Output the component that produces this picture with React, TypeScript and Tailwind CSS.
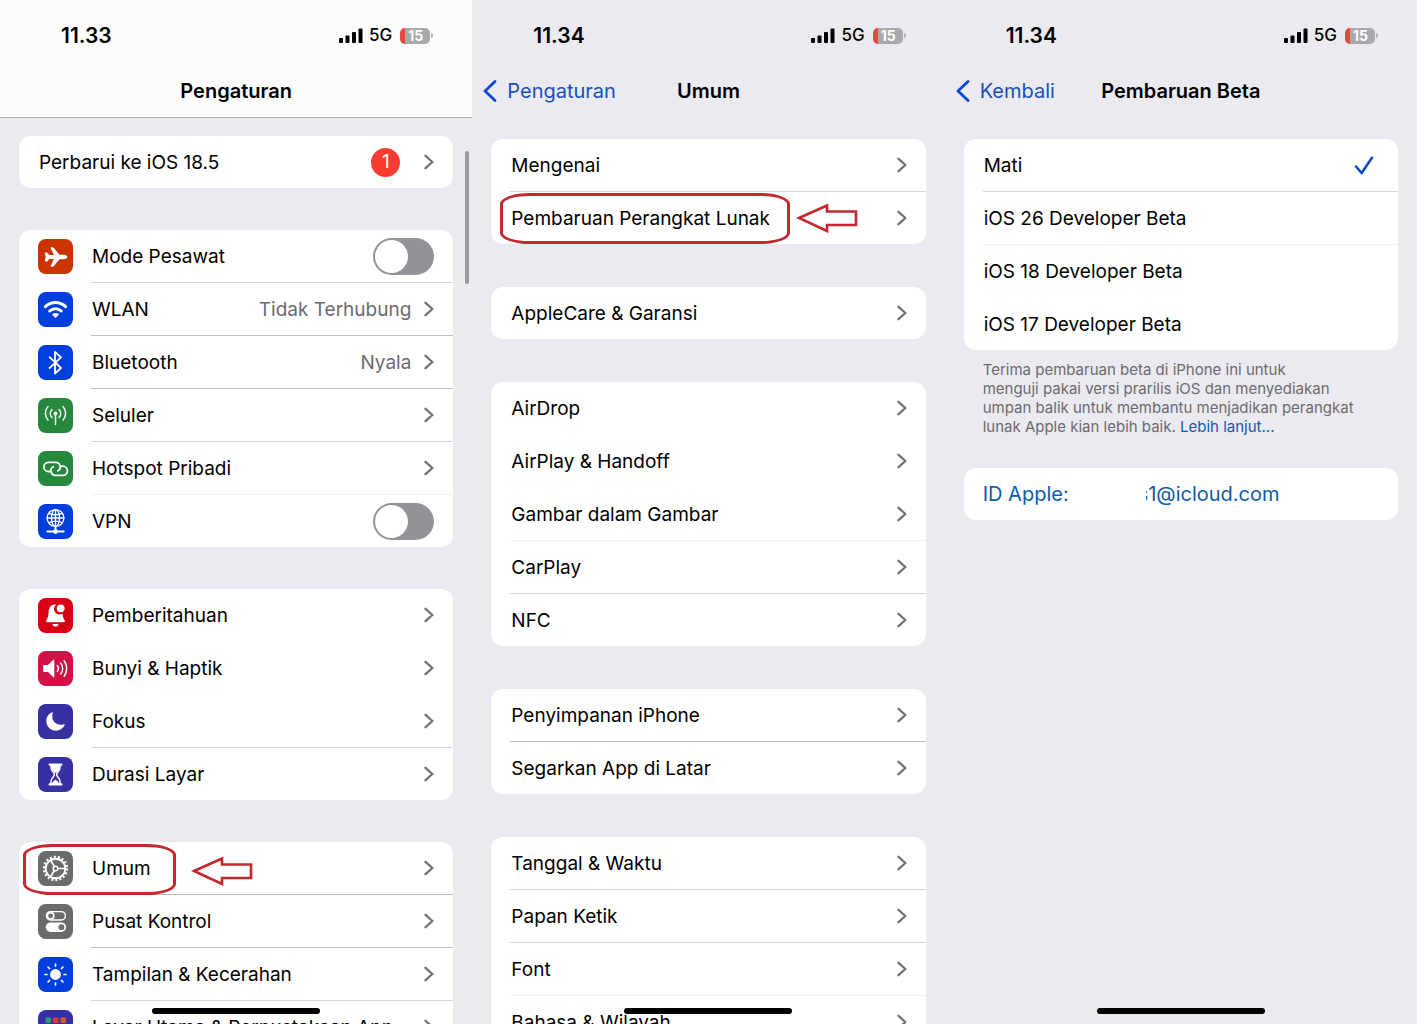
import { useState, type ReactNode } from "react";
import { IoAirplane, IoMoon } from "react-icons/io5";

/* ---------- Icons ---------- */

function Glyph({ children }: { children: ReactNode }) {
  return (
    <svg viewBox="0 0 35 35" className="h-full w-full" fill="none" stroke="#fff" strokeLinecap="round" strokeLinejoin="round" aria-hidden="true">
      {children}
    </svg>
  );
}

const WifiGlyph = () => (
  <Glyph>
    <path d="M7.4 14.6a14.4 14.4 0 0 1 20.2 0" strokeWidth="3" />
    <path d="M11.7 19a8.4 8.4 0 0 1 11.6 0" strokeWidth="3" />
    <path d="M17.5 26l-3.6-3.600a5.200 5.200 0 0 1 7.200 0z" fill="#fff" stroke="none" />
  </Glyph>
);

const BluetoothGlyph = () => (
  <Glyph>
    <path d="M11.600 12.200L23 23l-6 5.500V7L23 12.400L11.600 23" strokeWidth="1.800" />
  </Glyph>
);

const AntennaGlyph = () => (
  <Glyph>
    <circle cx="17.500" cy="15.500" r="2" fill="#fff" stroke="none" />
    <path d="M17.500 16v10.500" strokeWidth="1.500" />
    <path d="M14 11.500a5.500 5.500 0 0 0 0 8M21 11.500a5.500 5.500 0 0 1 0 8M10 8.500a10 10 0 0 0 0 13.500M25 8.500a10 10 0 0 1 0 13.500" strokeWidth="1.500" />
  </Glyph>
);

const LinkGlyph = () => (
  <Glyph>
    <path d="M11.500 20.500H10.500a4.600 4.600 0 0 1 0-9.200h7.200a4.600 4.600 0 0 1 2.200 8.600" strokeWidth="1.800" />
    <path d="M23.500 15.200h1.300a4.600 4.600 0 0 1 0 9.200h-7.200a4.600 4.600 0 0 1-2.300-8.600" strokeWidth="1.800" />
  </Glyph>
);

const VpnGlyph = () => (
  <Glyph>
    <g strokeWidth="1.400">
      <circle cx="17.500" cy="14" r="8.400" />
      <ellipse cx="17.500" cy="14" rx="4" ry="8.400" />
      <path d="M17.500 5.600v16.800M9.100 14h16.800M11 9.400q6.500 3 13 0M11 18.600q6.500-3 13 0" />
    </g>
    <path d="M9.300 27.600h16.400M17.500 23v4" strokeWidth="2" />
    <circle cx="17.500" cy="27.600" r="2.400" fill="#fff" stroke="none" />
  </Glyph>
);

const BellGlyph = () => (
  <Glyph>
    <path d="M18.200 6.700c-4.800-.7-7.300 2.600-7.600 7.400-.2 4.300-.6 5.600-2.200 8.200-.7 1.200-.3 1.900.8 1.900h16.600c1.100 0 1.500-.7.800-1.900-1.300-2.200-1.800-3.500-2-6.800a5.200 5.200 0 0 1-6.400-8.800z" fill="#fff" stroke="none" />
    <path d="M14.400 26h6.200c-.3 1.700-1.500 2.600-3.100 2.600s-2.800-.9-3.100-2.600z" fill="#fff" stroke="none" />
    <circle cx="22.700" cy="10.300" r="3.900" fill="#fff" stroke="none" />
  </Glyph>
);

const SpeakerGlyph = () => (
  <Glyph>
    <path d="M6 14h4l5.400-5.300c.4-.4.900-.2.900.4v16.800c0 .6-.5.800-.9.400L10 21H6c-.5 0-.8-.3-.8-.8v-5.400c0-.5.300-.8.800-.8z" fill="#fff" stroke="none" />
    <path d="M19.300 14.500a5 5 0 0 1 0 6M22.700 12a9 9 0 0 1 0 11M26.200 9.700a13.500 13.500 0 0 1 0 15.600" strokeWidth="1.500" />
  </Glyph>
);

const HourglassGlyph = () => (
  <Glyph>
    <path d="M11.600 7.600h11.800M11.600 27.400h11.800" strokeWidth="2.200" />
    <path d="M13 8v2.500c0 3.500 3.400 4.700 3.400 7s-3.400 3.500-3.400 7V27h9v-2.500c0-3.500-3.400-4.700-3.400-7s3.400-3.500 3.400-7V8z" strokeWidth="1.500" />
    <path d="M13.500 8h8v2.800c0 2.200-2.300 3.500-3.200 4.900h-1.600c-.9-1.400-3.200-2.700-3.200-4.900zM14 27c.3-2.600 2.200-3 3.500-4.500 1.300 1.500 3.200 1.900 3.500 4.500z" fill="#fff" stroke="none" />
  </Glyph>
);

const GearGlyph = () => (
  <Glyph>
    <circle cx="17.500" cy="17.500" r="11.600" strokeWidth="2.200" strokeLinecap="butt" strokeDasharray="2.025 2.025" />
    <circle cx="17.500" cy="17.500" r="9.800" strokeWidth="1.900" />
    <circle cx="17.500" cy="17.500" r="2.300" strokeWidth="1.400" />
    <path d="M19.800 17.500h7M16.300 15.500l-3.600-6.200M16.300 19.500l-3.600 6.200" strokeWidth="1.600" />
  </Glyph>
);

const SwitchesGlyph = () => (
  <Glyph>
    <rect x="8.400" y="7.600" width="19" height="8.400" rx="4.200" strokeWidth="1.400" />
    <circle cx="12.600" cy="11.800" r="3.200" strokeWidth="1.600" />
    <rect x="7.700" y="18.400" width="20.300" height="9.600" rx="4.800" fill="#fff" stroke="none" />
    <circle cx="23.400" cy="23.200" r="2.900" fill="#6b6b6e" stroke="none" />
  </Glyph>
);

const SunGlyph = () => (
  <Glyph>
    <circle cx="17.500" cy="17.500" r="5.400" fill="#fff" stroke="none" />
    <path d="M17.500 7v2M17.500 26v2M7 17.500h2M26 17.500h2M10.100 10.100l1.400 1.400M23.500 23.500l1.400 1.400M10.100 24.900l1.400-1.400M23.500 11.500l1.400-1.400" strokeWidth="1.700" />
  </Glyph>
);

const HomeGridGlyph = () => (
  <Glyph>
    <g stroke="none">
      <rect x="7.500" y="7.500" width="5.500" height="5.500" rx="1" fill="#2f9e63" />
      <rect x="15" y="7.500" width="5.500" height="5.500" rx="1" fill="#d8383b" />
      <rect x="22.500" y="7.500" width="5.500" height="5.500" rx="1" fill="#cf5a2c" />
      <rect x="7.500" y="15" width="5.500" height="5.500" rx="1" fill="#2a7de1" />
      <rect x="15" y="15" width="5.500" height="5.500" rx="1" fill="#e8a33a" />
      <rect x="22.500" y="15" width="5.500" height="5.500" rx="1" fill="#9a9aa0" />
    </g>
  </Glyph>
);

const Chevron = () => (
  <svg viewBox="0 0 10 16" className="h-4 w-[10px] shrink-0" fill="none" stroke="#727276" strokeWidth="2.300" strokeLinecap="round" strokeLinejoin="round" aria-hidden="true">
    <path d="M1.500 1.800L8.400 8l-6.900 6.200" />
  </svg>
);

/* ---------- Red markers drawn over the lists ---------- */

function Arrow({ className }: { className: string }) {
  return (
    <svg viewBox="0 0 64 30" className={`pointer-events-none absolute h-[30px] w-16 ${className}`} fill="none" stroke="#c4272e" strokeWidth="2.600" aria-hidden="true">
      <path d="M3 15L31 2.500V8.500H60V22H31V28z" />
    </svg>
  );
}

function Marker({ className }: { className: string }) {
  return <span aria-hidden="true" className={`pointer-events-none absolute rounded-[30px/11px] border-[3px] border-[#c4272e] ${className}`} />;
}

/* ---------- Building blocks ---------- */

type Line = "none" | "faint" | "light" | "dark";
const lineColor: Record<Line, string> = {
  none: "border-transparent",
  faint: "border-[#f1f1f2]",
  light: "border-[#d6d6d8]",
  dark: "border-[#bcbcbf]",
};

type RowProps = {
  label: string;
  line?: Line;
  icon?: ReactNode;
  tint?: string;
  value?: string;
  badge?: string;
  toggle?: boolean;
  overlay?: ReactNode;
};

function Row({ label, line, icon, tint = "", value, badge, toggle, overlay }: RowProps) {
  const edge = line ? `border-b ${lineColor[line]}` : "";
  const body = (
    <>
      {icon && (
        <span className={`flex size-[35px] shrink-0 items-center justify-center overflow-hidden rounded-lg text-white ${tint}`}>{icon}</span>
      )}
      <span className={`flex min-w-0 flex-1 items-center pr-[19px] ${edge}`}>
        <span className="flex h-[52px] min-w-0 flex-1 items-center pt-[3px] pl-px">
          <span className="truncate">{label}</span>
        </span>
        {value && <span className="mr-[13px] pt-[3px] text-[#6b6b6f]">{value}</span>}
        {badge && (
          <span className="mr-6 flex size-[29px] items-center justify-center rounded-full bg-[#fb3b30] text-white">{badge}</span>
        )}
        {toggle ? (
          <input
            type="checkbox"
            role="switch"
            className="h-[37px] w-[61px] shrink-0 appearance-none rounded-full bg-[#929299] p-[2px] before:block before:size-[33px] before:rounded-full before:bg-white checked:bg-[#34c759] checked:before:ml-6"
          />
        ) : (
          <Chevron />
        )}
      </span>
    </>
  );
  const layout = "flex w-full items-center gap-[18px] pl-[19px] text-left";
  return (
    <li className="relative">
      {toggle ? <label className={layout}>{body}</label> : <button type="button" className={layout}>{body}</button>}
      {overlay}
    </li>
  );
}

function Card({ children }: { children: ReactNode }) {
  return <ul className="rounded-xl bg-white">{children}</ul>;
}

function StatusBar({ time }: { time: string }) {
  return (
    <div className="flex h-[71px] items-center justify-between pr-[39px] pl-[61px]">
      <span className="text-[21px] font-semibold">{time}</span>
      <span className="flex items-center">
        <svg viewBox="0 0 24 15" className="h-[15px] w-6" aria-hidden="true">
          <rect x="0" y="10" width="4" height="5" rx="1" />
          <rect x="6.500" y="7.500" width="4" height="7.500" rx="1" />
          <rect x="13" y="4" width="4" height="11" rx="1" />
          <rect x="19.500" y="0.500" width="4" height="14.500" rx="1" />
        </svg>
        <span className="mr-2 ml-[6px] text-[17px] font-medium">5G</span>
        <span className="flex h-4 w-[30px] items-center justify-center overflow-hidden rounded-[5px] border-l-[5px] border-[#e8473f] bg-[#a9a9ac] pr-1 text-sm font-bold text-white">
          15
        </span>
        <span className="ml-px h-[5px] w-[2px] rounded-r-full bg-[#b5b5b8]" />
      </span>
    </div>
  );
}

function Phone({ time, title, back, raised, children }: { time: string; title: string; back?: string; raised?: boolean; children: ReactNode }) {
  return (
    <section className="relative flex min-w-0 flex-col overflow-hidden">
      <header className={raised ? "border-b border-[#b2b2b6] bg-[#fdfcfd]" : "mb-1"}>
        <StatusBar time={time} />
        <div className="grid h-[46px] grid-cols-[1fr_auto_1fr] items-start">
          {back ? (
            <button type="button" className="flex items-center gap-[10px] pl-[11px] text-[20px] text-[#1650bd]">
              <svg viewBox="0 0 14 22" className="h-[22px] w-[14px]" fill="none" stroke="#0a48d6" strokeWidth="2.800" strokeLinecap="round" strokeLinejoin="round" aria-hidden="true">
                <path d="M12 1.500L2 11l10 9.500" />
              </svg>
              <span className="leading-10">{back}</span>
            </button>
          ) : (
            <span />
          )}
          <h1 className="text-[20px] leading-10 font-semibold">{title}</h1>
        </div>
      </header>
      {children}
      <div aria-hidden="true" className="absolute inset-x-0 bottom-[10px] flex justify-center">
        <span className="h-[6px] w-[168px] rounded-full bg-black" />
      </div>
    </section>
  );
}

/* ---------- Screens ---------- */

function SettingsScreen() {
  return (
    <Phone time="11.33" title="Pengaturan" raised>
      <div className="relative flex flex-col gap-[42px] px-[19px] pt-[18px]">
        <span aria-hidden="true" className="absolute top-[33px] right-[3px] h-[133px] w-1 rounded-full bg-[#9b9b9f]" />
        <Card>
          <Row label="Perbarui ke iOS 18.5" badge="1" />
        </Card>
        <Card>
          <Row label="Mode Pesawat" icon={<IoAirplane className="size-6" />} tint="bg-[#cb3300]" toggle line="light" />
          <Row label="WLAN" icon={<WifiGlyph />} tint="bg-[#003fdb]" value="Tidak Terhubung" line="dark" />
          <Row label="Bluetooth" icon={<BluetoothGlyph />} tint="bg-[#003fdb]" value="Nyala" line="dark" />
          <Row label="Seluler" icon={<AntennaGlyph />} tint="bg-[#24893d]" line="light" />
          <Row label="Hotspot Pribadi" icon={<LinkGlyph />} tint="bg-[#24893d]" line="faint" />
          <Row label="VPN" icon={<VpnGlyph />} tint="bg-[#003fdb]" toggle />
        </Card>
        <Card>
          <Row label="Pemberitahuan" icon={<BellGlyph />} tint="bg-[#d70016]" line="none" />
          <Row label="Bunyi & Haptik" icon={<SpeakerGlyph />} tint="bg-[#d31048]" line="none" />
          <Row label="Fokus" icon={<IoMoon className="size-[21px]" />} tint="bg-[#3730a3]" line="light" />
          <Row label="Durasi Layar" icon={<HourglassGlyph />} tint="bg-[#3730a3]" />
        </Card>
        <Card>
          <Row
            label="Umum"
            icon={<GearGlyph />}
            tint="bg-[#6b6b6e]"
            line="dark"
            overlay={
              <>
                <Marker className="top-[2px] left-1 h-[51px] w-[153px]" />
                <Arrow className="top-[14px] left-[172px]" />
              </>
            }
          />
          <Row label="Pusat Kontrol" icon={<SwitchesGlyph />} tint="bg-[#6b6b6e]" line="dark" />
          <Row label="Tampilan & Kecerahan" icon={<SunGlyph />} tint="bg-[#003fdb]" line="light" />
          <Row label="Layar Utama & Perpustakaan App" icon={<HomeGridGlyph />} tint="bg-[#3730a3]" />
        </Card>
      </div>
    </Phone>
  );
}

function GeneralScreen() {
  return (
    <Phone time="11.34" title="Umum" back="Pengaturan">
      <div className="flex flex-col gap-[43px] px-[19px] pt-[18px]">
        <Card>
          <Row label="Mengenai" line="light" />
          <Row
            label="Pembaruan Perangkat Lunak"
            overlay={
              <>
                <Marker className="top-px left-[9px] h-[51px] w-[290px]" />
                <Arrow className="top-[11px] left-[305px]" />
              </>
            }
          />
        </Card>
        <Card>
          <Row label="AppleCare & Garansi" />
        </Card>
        <Card>
          <Row label="AirDrop" line="none" />
          <Row label="AirPlay & Handoff" line="none" />
          <Row label="Gambar dalam Gambar" line="faint" />
          <Row label="CarPlay" line="light" />
          <Row label="NFC" />
        </Card>
        <Card>
          <Row label="Penyimpanan iPhone" line="dark" />
          <Row label="Segarkan App di Latar" />
        </Card>
        <Card>
          <Row label="Tanggal & Waktu" line="light" />
          <Row label="Papan Ketik" line="light" />
          <Row label="Font" line="faint" />
          <Row label="Bahasa & Wilayah" />
        </Card>
      </div>
    </Phone>
  );
}

const channels: { name: string; line: string }[] = [
  { name: "Mati", line: "border-b border-[#d6d6d8]" },
  { name: "iOS 26 Developer Beta", line: "border-b border-[#f1f1f2]" },
  { name: "iOS 18 Developer Beta", line: "border-b border-transparent" },
  { name: "iOS 17 Developer Beta", line: "" },
];

function BetaScreen() {
  const [channel, setChannel] = useState("Mati");
  return (
    <Phone time="11.34" title="Pembaruan Beta" back="Kembali">
      <div className="flex flex-col px-[19px] pt-[18px]">
        <div role="radiogroup" aria-label="Pembaruan Beta" className="rounded-xl bg-white pl-[19px]">
          {channels.map(({ name, line }) => (
            <label key={name} className={`flex items-center justify-between pr-6 ${line}`}>
              <span className="flex h-[52px] items-center pt-[3px] pl-px">{name}</span>
              <input type="radio" name="channel" className="sr-only" checked={channel === name} onChange={() => setChannel(name)} />
              {channel === name && (
                <svg viewBox="0 0 20 19" className="h-[19px] w-5" fill="none" stroke="#0a48c8" strokeWidth="2.500" strokeLinecap="round" strokeLinejoin="round" aria-hidden="true">
                  <path d="M2 10.500L7.600 17 18 1.800" />
                </svg>
              )}
            </label>
          ))}
        </div>
        <p className="mt-[10px] px-[19px] text-[15px] leading-[19px] text-[#6a6a6f]">
          Terima pembaruan beta di iPhone ini untuk
          <br />
          menguji pakai versi prarilis iOS dan menyediakan
          <br />
          umpan balik untuk membantu menjadikan perangkat
          <br />
          lunak Apple kian lebih baik.{" "}
          <a href="#lebih-lanjut" className="text-[#0b5cad]">
            Lebih lanjut...
          </a>
        </p>
        <button type="button" className="mt-8 flex h-[52px] items-center rounded-xl bg-white pl-[19px] text-left text-[20px] text-[#0f5ca8]">
          <span className="w-[163px]">ID Apple:</span>
          <span className="flex overflow-hidden">
            <span className="-ml-2">s1@icloud.com</span>
          </span>
        </button>
      </div>
    </Phone>
  );
}

export default function App() {
  return (
    <main className="grid h-screen grid-cols-3 overflow-hidden bg-[#ebeaf0] font-['Inter',sans-serif] text-[19px] text-black">
      <SettingsScreen />
      <GeneralScreen />
      <BetaScreen />
    </main>
  );
}
